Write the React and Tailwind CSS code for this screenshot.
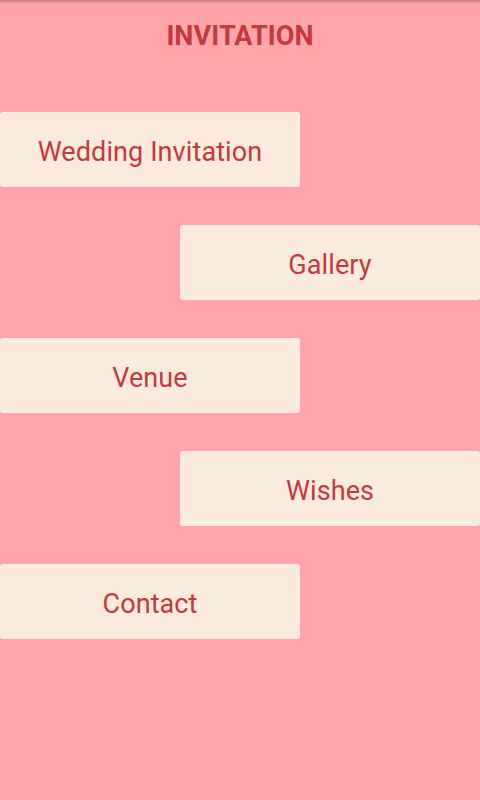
import React from "react";

const items = [
  { label: "Wedding Invitation", right: false },
  { label: "Gallery", right: true },
  { label: "Venue", right: false },
  { label: "Wishes", right: true },
  { label: "Contact", right: false },
];

export default function App() {
  return (
    <div
      className="relative w-[480px] h-[800px] bg-[#ffa4a8] overflow-hidden"
      style={{ fontFamily: "Roboto, 'Noto Sans', sans-serif" }}
    >
      <div className="absolute top-0 left-0 w-full h-[4px] bg-gradient-to-b from-[#00000040] to-transparent" />
      <div className="flex justify-center pt-[19px] h-[112px]">
        <span className="text-[27px] leading-[34px] font-bold text-[#c23a3d] tracking-[0.1px]">
          INVITATION
        </span>
      </div>
      <div className="flex flex-col gap-[38px]">
        {items.map((it) => (
          <div key={it.label} className={it.right ? "flex justify-end" : "flex justify-start"}>
            <div className="w-[300px] h-[75px] bg-[#faebdc] rounded-[3px] flex items-center justify-center pt-[5px] text-[27px] text-[#c23a3d] tracking-[0.1px]">
              {it.label}
            </div>
          </div>
        ))}
      </div>
    </div>
  );
}
